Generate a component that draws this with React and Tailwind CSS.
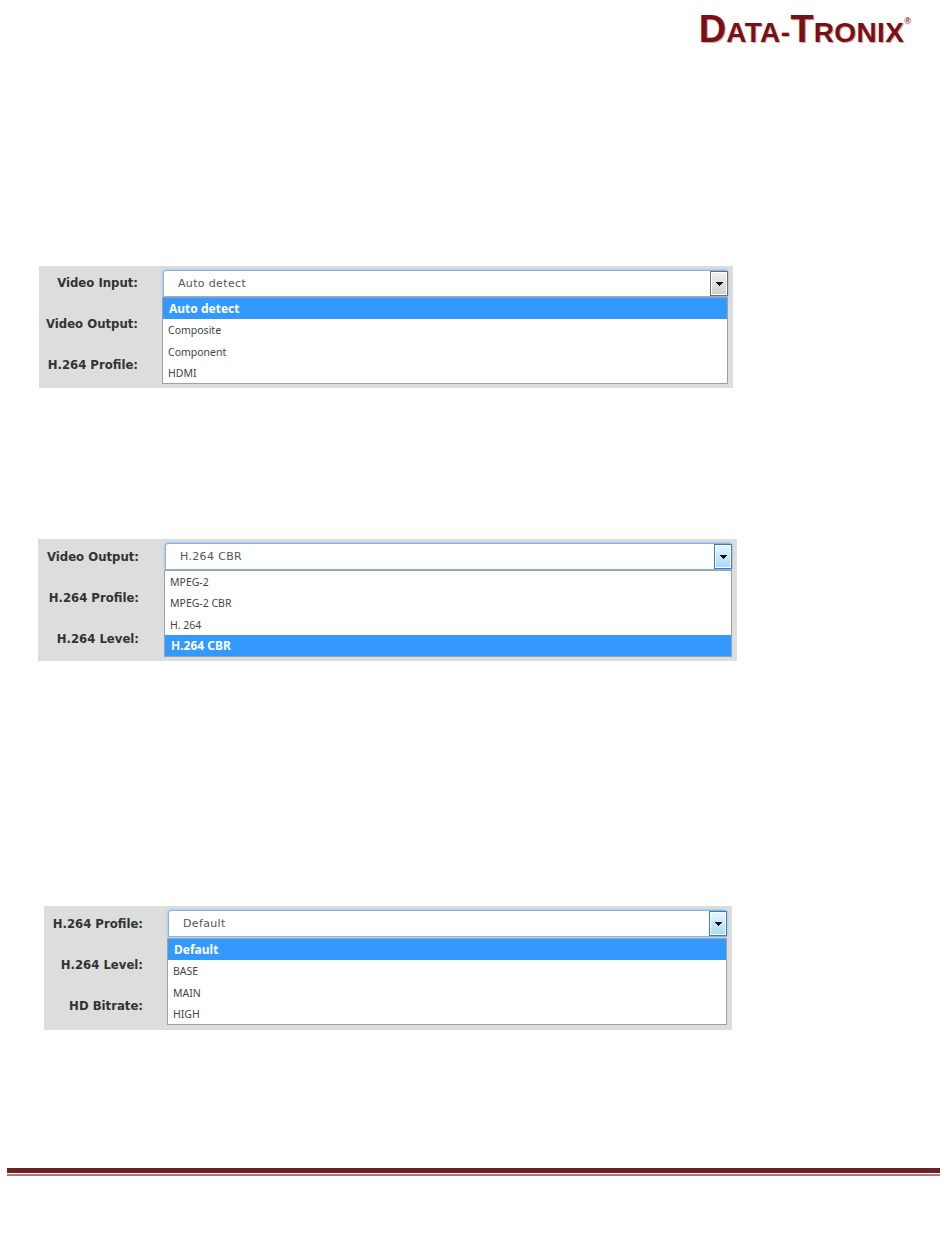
import React from "react";

const labelFont = "font-['DejaVu_Sans',sans-serif] font-bold text-[11.7px] text-[#333333]";

const panels = [
  {
    id: 1,
    wrap: "ml-[39px] mt-[218px] w-[694px] h-[122px]",
    labelCol: "w-[99px] mr-[25px]",
    labelPad: "pt-[10px]",
    col: "w-[565px] pt-[4px]",
    labels: ["Video Input:", "Video Output:", "H.264 Profile:"],
    value: "Auto detect",
    active: false,
    items: ["Auto detect", "Composite", "Component", "HDMI"],
    selected: 0,
    listGap: "",
  },
  {
    id: 2,
    wrap: "ml-[38px] mt-[151px] w-[699px] h-[122px]",
    labelCol: "w-[101px] mr-[26px]",
    labelPad: "pt-[11px]",
    col: "w-[567px] pt-[4px]",
    labels: ["Video Output:", "H.264 Profile:", "H.264 Level:"],
    value: "H.264 CBR",
    active: true,
    items: ["MPEG-2", "MPEG-2 CBR", "H. 264", "H.264 CBR"],
    selected: 3,
    listGap: "",
  },
  {
    id: 3,
    wrap: "ml-[44px] mt-[245px] w-[688px] h-[124px]",
    labelCol: "w-[99px] mr-[25px]",
    labelPad: "pt-[11px]",
    col: "w-[559px] pt-[4px]",
    labels: ["H.264 Profile:", "H.264 Level:", "HD Bitrate:"],
    value: "Default",
    active: true,
    items: ["Default", "BASE", "MAIN", "HIGH"],
    selected: 0,
    listGap: "mt-[1px]",
  },
];

const Arrow = () => (
  <svg width="7" height="4" viewBox="0 0 7 4" className="block">
    <path d="M0 0h7v1H6v1H5v1H4v1H3V3H2V2H1V1H0z" fill="#111111" />
  </svg>
);

const Panel = ({ panel }) => (
  <div className={`flex bg-[#dddddd] ${panel.wrap}`}>
    <div className={`shrink-0 ${panel.labelCol} ${panel.labelPad}`}>
      {panel.labels.map((label) => (
        <div key={label} className={`h-[41px] leading-[14px] text-right ${labelFont}`}>
          {label}
        </div>
      ))}
    </div>

    <div className={`shrink-0 ${panel.col}`}>
      {/* select box */}
      <div className="h-[27px] flex items-center justify-between bg-white border border-[#7eb4ea] rounded-t-[3px] shadow-[0_0_3px_rgba(82,168,236,0.6)] pl-[14px]">
        <span className="mt-[2px] font-['DejaVu_Sans',sans-serif] text-[11px] tracking-[0.35px] text-[#555555]">
          {panel.value}
        </span>
        <div
          className={
            panel.active
              ? "-mr-px w-[18px] h-[25px] flex items-center justify-center border border-[#3c7fb1] shadow-[inset_0_0_0_1px_#ffffff] bg-gradient-to-b from-[#eaf6fd] to-[#a7d9f5]"
              : "-mr-px w-[18px] h-[25px] flex items-center justify-center border border-[#707070] shadow-[inset_0_0_0_1px_#ffffff] bg-gradient-to-b from-[#f2f2f2] to-[#cfcfcf]"
          }
        >
          <Arrow />
        </div>
      </div>

      {/* open list */}
      <div className={`bg-white border border-[#a0a0a0] h-[87px] -ml-px ${panel.listGap}`}>
        {panel.items.map((item, i) => (
          <div
            key={item}
            className={
              i === panel.selected
                ? "h-[21.25px] leading-[21px] pl-[6px] bg-[#3399ff] text-white font-bold text-[12px] font-['Noto_Sans',sans-serif]"
                : "h-[21.25px] leading-[23px] pl-[5px] text-[#444444] text-[10.5px] font-['Noto_Sans',sans-serif]"
            }
          >
            {item}
          </div>
        ))}
      </div>
    </div>
  </div>
);

const Logo = () => (
  <div className="flex justify-end pr-[39px] h-[48px] pt-[8px]">
    <div className="font-['Liberation_Sans',sans-serif] font-bold text-[#7a1015] leading-[42px] whitespace-nowrap [text-shadow:1px_1px_1px_rgba(90,20,20,0.35)]">
      <span className="text-[38px]">D</span>
      <span className="text-[28px] tracking-[0.4px]">ATA-</span>
      <span className="text-[38px]">T</span>
      <span className="text-[28px] tracking-[0.4px]">RONIX</span>
      <sup className="text-[9px] font-normal align-[14px] leading-none">®</sup>
    </div>
  </div>
);

export default function App() {
  return (
    <div className="w-[950px] h-[1241px] bg-white overflow-hidden">
      <Logo />
      {panels.map((panel) => (
        <Panel key={panel.id} panel={panel} />
      ))}
      {/* footer rule */}
      <div className="ml-[7px] mr-[10px] mt-[138px]">
        <div className="h-[5px] bg-[#6b2226]" />
        <div className="h-[2px] mt-[1px] bg-[#a9787b]" />
      </div>
    </div>
  );
}
